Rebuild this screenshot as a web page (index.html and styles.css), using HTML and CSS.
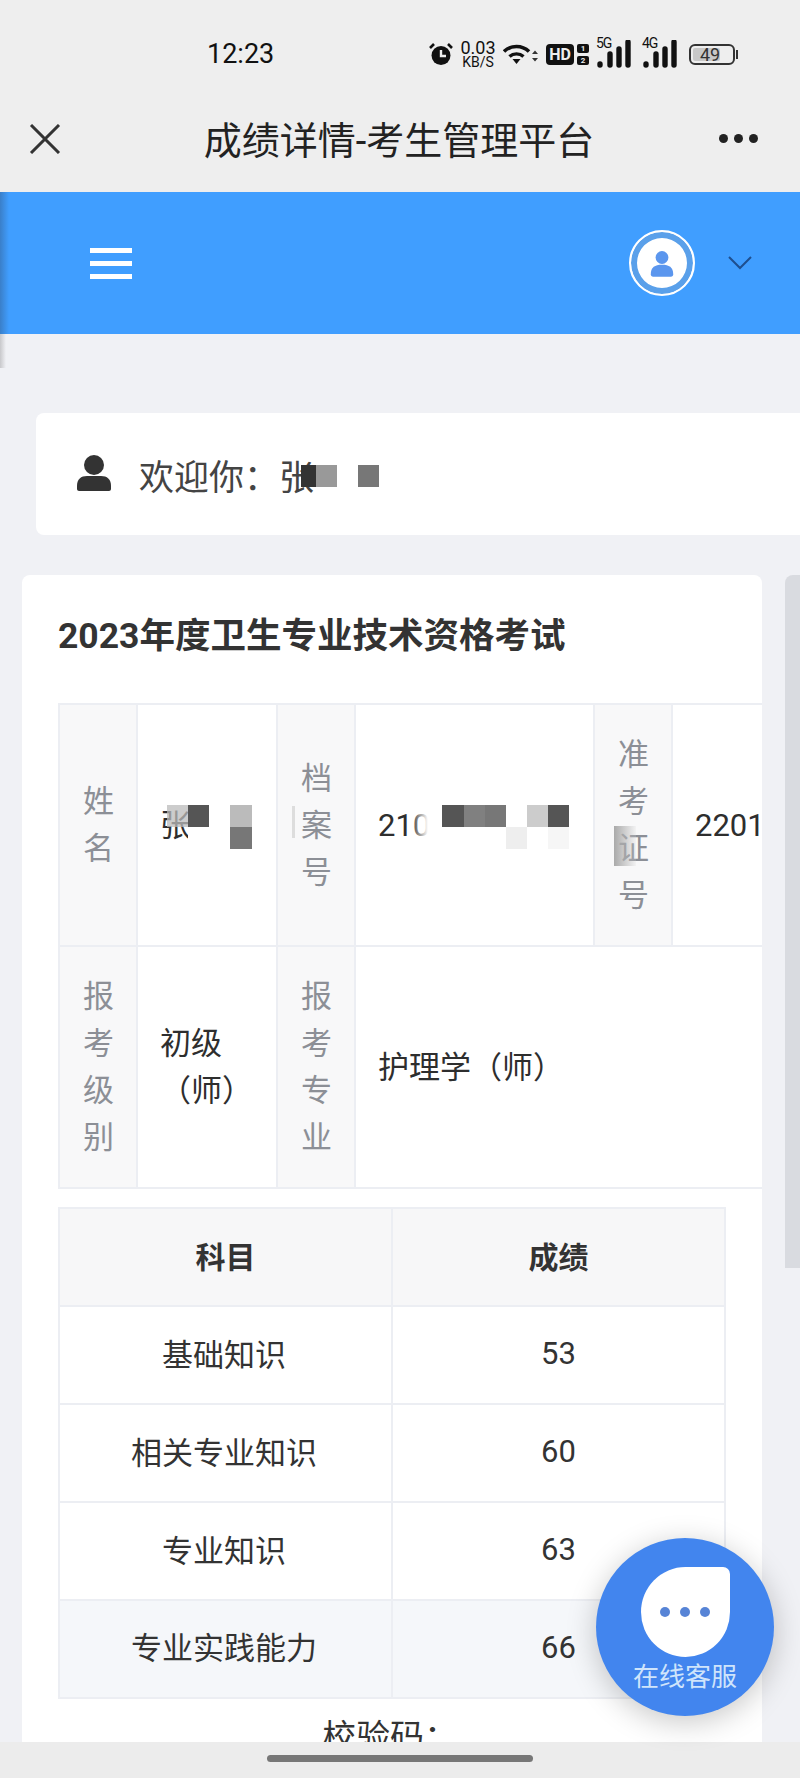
FILE: index.html
```html
<!DOCTYPE html>
<html lang="zh-CN">
<head>
<meta charset="utf-8">
<title>成绩详情-考生管理平台</title>
<link rel="stylesheet" href="styles.css">
</head>
<body>
<div class="screen">
  <div class="statusbar">
    <span class="time">12:23</span>
    <div class="status-icons">
      <svg class="ic-alarm" width="24" height="24" viewBox="0 0 24 24"><circle cx="12" cy="13.5" r="9.5" fill="#111"/><path d="M1 6l4-4M23 6l-4-4" stroke="#111" stroke-width="2.6"/><path d="M12 8v6h5" stroke="#eee" stroke-width="2.4" fill="none"/></svg>
      <div class="speed"><span class="speed-a">0.03</span><span class="speed-b">KB/S</span></div>
      <svg class="ic-wifi" width="35" height="22" viewBox="0 0 35 22"><path d="M1 8.5a18 18 0 0 1 25 0" stroke="#111" stroke-width="3.6" fill="none"/><path d="M6.5 13.5a10.500 10.500 0 0 1 14 0" stroke="#111" stroke-width="3.400" fill="none"/><path d="M9.500 16h8l-4 5z" fill="#111"/><path d="M29 11l3-3.500 3 3.500zM29 15l3 3.500 3-3.500z" fill="#333"/></svg>
      <span class="hd">HD</span>
      <div class="sims"><span class="sim">1</span><span class="sim">2</span></div>
      <div class="signal"><span class="net">5G</span><svg width="36" height="28" viewBox="0 0 36 28"><path d="M4 24v1M14 14v11M23 9v16M32 2v23" stroke="#111" stroke-width="5.400" stroke-linecap="round"/></svg></div>
      <div class="signal signal-last"><span class="net">4G</span><svg width="36" height="28" viewBox="0 0 36 28"><path d="M4 24v1M14 14v11M23 9v16M32 2v23" stroke="#111" stroke-width="5.400" stroke-linecap="round"/></svg></div>
      <div class="battery"><span class="battery-body"><span class="battery-level"></span><span class="battery-num">49</span></span><span class="battery-tip"></span></div>
    </div>
  </div>
  <div class="navbar">
    <svg width="32" height="30" viewBox="0 0 32 30"><path d="M2 1l28 28M30 1L2 29" stroke="#333" stroke-width="3" fill="none"/></svg>
    <h1 class="nav-title">成绩详情-考生管理平台</h1>
    <div class="nav-dots"><i></i><i></i><i></i></div>
  </div>
  <header class="topbar">
    <div class="burger"><i></i><i></i><i></i></div>
    <div class="user-menu">
      <div class="avatar">
        <svg width="24" height="27" viewBox="0 0 30 33"><circle cx="15" cy="9" r="8" fill="#5b96ee"/><path d="M1 30c0-9 5-12 14-12s14 3 14 12c0 2-1 3-3 3H4c-2 0-3-1-3-3z" fill="#5b96ee"/></svg>
      </div>
      <svg width="24" height="14" viewBox="0 0 24 14"><path d="M1 1l11 11L23 1" stroke="#1e4f8f" stroke-width="2" fill="none"/></svg>
    </div>
  </header>
  <main class="content">
    <div class="edge-stripe"></div>
    <section class="welcome">
      <svg class="welcome-icon" width="34" height="36" viewBox="0 0 34 36"><circle cx="17" cy="10" r="10" fill="#333"/><path d="M0 31c0-7 4-10 10-10h14c6 0 10 3 10 10v3c0 1-1 2-2 2H2c-1 0-2-1-2-2z" fill="#333"/></svg>
      <span class="welcome-text">欢迎你：张</span>
      <svg class="mosaic mosaic-welcome" width="80" height="22" viewBox="0 0 80 22"><rect x="0" width="15" height="22" fill="#333"/><rect x="15" width="21" height="22" fill="#999"/><rect x="57" width="21" height="22" fill="#777"/></svg>
    </section>
    <div class="scrollbar"></div>
    <section class="result-card">
      <h2 class="exam-title">2023年度卫生专业技术资格考试</h2>
      <div class="desc-wrap">
        <table class="desc">
          <colgroup><col class="c-label"><col class="c-name"><col class="c-label"><col class="c-file"><col class="c-label"><col class="c-ticket"></colgroup>
          <tr>
            <td class="lbl">姓名</td>
            <td class="val">张
              <svg class="mosaic mosaic-name" width="86" height="44" viewBox="0 0 86 44"><rect x="0" width="21" height="22" fill="#bbb" opacity=".75"/><rect x="21" width="21" height="22" fill="#555"/><rect x="63" width="22" height="22" fill="#bbb"/><rect x="63" y="22" width="22" height="22" fill="#777"/><rect x="21" y="22" width="21" height="22" fill="#fff"/></svg>
            </td>
            <td class="lbl">档案号<span class="smear smear-file"></span></td>
            <td class="val">210
              <svg class="mosaic mosaic-file" width="160" height="44" viewBox="0 0 160 44"><defs><linearGradient id="wipe" x1="0" y1="0" x2="1" y2="0"><stop offset="0" stop-color="#fff" stop-opacity=".2"/><stop offset=".5" stop-color="#fff"/></linearGradient></defs><rect x="0" width="28" height="44" fill="url(#wipe)"/><rect x="28" width="22" height="22" fill="#555"/><rect x="50" width="21" height="22" fill="#808080"/><rect x="71" width="21" height="22" fill="#777"/><rect x="92" y="22" width="21" height="22" fill="#eee"/><rect x="113" width="21" height="22" fill="#ccc"/><rect x="134" width="21" height="22" fill="#555"/><rect x="134" y="22" width="21" height="22" fill="#f6f6f6"/></svg>
            </td>
            <td class="lbl">准考证号<span class="smear smear-ticket"></span></td>
            <td class="val">2201</td>
          </tr>
          <tr>
            <td class="lbl">报考级别</td>
            <td class="val">初级（师）</td>
            <td class="lbl">报考专业</td>
            <td class="val" colspan="3">护理学（师）</td>
          </tr>
        </table>
      </div>
      <table class="scores">
        <thead><tr><th>科目</th><th>成绩</th></tr></thead>
        <tbody>
          <tr><td class="subject">基础知识</td><td>53</td></tr>
          <tr><td class="subject">相关专业知识</td><td>60</td></tr>
          <tr><td class="subject">专业知识</td><td>63</td></tr>
          <tr class="hover"><td class="subject">专业实践能力</td><td>66</td></tr>
        </tbody>
      </table>
      <p class="check-code">校验码：</p>
    </section>
  </main>
  <div class="homebar"><span class="home-pill"></span></div>
  <div class="fab">
    <div class="bubble"><i></i><i></i><i></i></div>
    <span class="fab-label">在线客服</span>
  </div>
</div>
</body>
</html>
```

FILE: styles.css
```css
* { box-sizing: border-box; }
html, body { margin: 0; padding: 0; }
body { font-family: Roboto, "Noto Sans CJK SC", sans-serif; color: #333; background: #eee; }
.screen { position: relative; width: 800px; height: 1778px; display: flex; flex-direction: column; overflow: hidden; }

.statusbar { height: 96px; background: #eeeeee; display: flex; align-items: center; justify-content: space-between; padding: 12px 62px 0 207px; }
.time { font-size: 27px; color: #111; line-height: 1; }
.status-icons { display: flex; align-items: center; height: 32px; }
.ic-alarm { margin-right: 7px; }
.speed { display: flex; flex-direction: column; align-items: center; width: 36px; margin-right: 7px; line-height: 1; color: #111; }
.speed-a { font-size: 18px; line-height: 16px; }
.speed-b { font-size: 14px; line-height: 13px; }
.ic-wifi { margin-right: 8px; }
.hd { width: 28px; height: 21px; background: #111; color: #eee; border-radius: 4px; font: 700 16px/21px Roboto, sans-serif; text-align: center; margin-right: 3px; }
.sims { display: flex; flex-direction: column; gap: 3px; margin-right: 7px; }
.sim { width: 12px; height: 9px; background: #111; color: #eee; border-radius: 2px; font: 700 8px/9px Roboto, sans-serif; text-align: center; }
.signal { position: relative; width: 36px; height: 28px; margin-right: 10px; }
.signal-last { margin-right: 11px; }
.signal svg { display: block; }
.net { position: absolute; left: 0; top: -4px; font-size: 14px; line-height: 14px; color: #111; letter-spacing: -1px; }
.battery { display: flex; align-items: center; }
.battery-body { position: relative; width: 46px; height: 21px; border: 2px solid #333; border-radius: 6px; display: block; overflow: hidden; }
.battery-level { position: absolute; left: 2px; top: 2px; bottom: 2px; width: 27px; background: #c8c8c8; border-radius: 2px; }
.battery-num { position: absolute; left: 0; right: 4px; top: 0; text-align: center; font-size: 18px; line-height: 17px; color: #333; }
.battery-tip { width: 2px; height: 9px; background: #333; margin-left: 1px; }

.navbar { height: 96px; background: #eeeeee; display: flex; align-items: center; justify-content: space-between; padding: 0 42px 11px 29px; }
.nav-title { margin: 6px 0 0 18px; font-size: 38px; font-weight: 400; color: #222; line-height: 1.2; }
.nav-dots { display: flex; gap: 6px; }
.nav-dots i { width: 9px; height: 9px; background: #222; border-radius: 50%; }

.topbar { height: 142px; background: #409eff; display: flex; align-items: center; justify-content: space-between; padding: 0 48px 0 90px; position: relative; }
.topbar::before { content: ""; position: absolute; left: 0; top: 0; bottom: 0; width: 9px; background: linear-gradient(90deg, #3a7fc9, #409eff); }
.burger { display: flex; flex-direction: column; gap: 8px; width: 42px; }
.burger i { height: 5px; background: #fff; }
.user-menu { display: flex; align-items: center; gap: 33px; }
.avatar { width: 66px; height: 66px; border-radius: 50%; border: 2px solid #fff; background: #fff; box-shadow: inset 0 0 0 6px #5aa0ea; display: flex; align-items: center; justify-content: center; }

.content { flex: 1; min-height: 0; background: #f0f1f5; position: relative; overflow: hidden; padding: 79px 0 0 22px; }
.edge-stripe { position: absolute; left: 0; top: 0; width: 6px; height: 34px; background: linear-gradient(90deg, #c8c8cb, #f0f1f5); }
.welcome { position: relative; margin-left: 14px; margin-right: -20px; height: 122px; background: #fff; border-radius: 8px; display: flex; align-items: center; padding-left: 41px; }
.welcome-icon { margin-right: 28px; margin-top: -2px; }
.welcome-text { font-size: 35px; line-height: 1; color: #444; margin-top: 9px; }
.mosaic { position: absolute; display: block; }
.mosaic-welcome { left: 265px; top: 52px; }

.scrollbar { position: absolute; right: 0; top: 241px; width: 15px; height: 693px; background: #d9dbe0; border-radius: 8px 0 0 0; }

.result-card { width: 740px; margin-top: 40px; height: 1300px; background: #fff; border-radius: 8px; padding: 0 0 0 36px; }
.exam-title { margin: 0; padding-top: 37px; height: 128px; font-size: 35.500px; line-height: 48px; font-weight: 700; color: #333; }

.desc-wrap { width: 704px; overflow: hidden; }
.desc { table-layout: fixed; width: 960px; border-collapse: collapse; font-size: 31px; line-height: 47px; }
.c-label { width: 78px; }
.c-name { width: 140px; }
.c-file { width: 239px; }
.c-ticket { width: 347px; }
.desc td { position: relative; height: 242px; border: 2px solid #eceef3; padding: 0 22px; vertical-align: middle; overflow: hidden; }
.desc .lbl { background: #f8f8f9; color: #8c8f96; text-align: center; padding: 0 23px; }
.desc .val { color: #2e2e2e; }
.mosaic-name { left: 29px; top: 100px; }
.mosaic-file { left: 58px; top: 100px; }
.smear { position: absolute; display: block; }
.smear-file { left: 14px; top: 101px; width: 3px; height: 32px; background: #ddd; }
.smear-ticket { left: 19px; top: 121px; width: 22px; height: 40px; background: linear-gradient(90deg, #aaa, rgba(220,220,220,.2)); }

.scores { table-layout: fixed; width: 668px; margin-top: 18px; border-collapse: collapse; font-size: 31px; text-align: center; }
.scores th, .scores td { height: 98px; border: 2px solid #eceef3; padding: 0 0 4px; color: #333; font-weight: 400; }
.scores .subject { padding: 0 3px 5px 0; }
.scores th { background: #f7f7f8; font-weight: 700; padding-bottom: 5px; font-size: 30px; }
.scores .hover td { background: #f5f7fa; }
.scores .hover .subject { padding-bottom: 8px; }
.check-code { margin: 16px 0 0; width: 668px; padding-right: 4px; font-size: 34px; line-height: 44px; text-align: center; color: #333; }

.homebar { height: 36px; background: #ececec; position: relative; display: flex; justify-content: center; padding-top: 13px; }
.home-pill { width: 266px; height: 7px; background: #777; border-radius: 4px; }

.fab { position: absolute; left: 596px; top: 1538px; width: 178px; height: 178px; border-radius: 50%; background: #4285ee; box-shadow: 0 6px 30px rgba(0,0,0,.22); display: flex; flex-direction: column; align-items: center; padding-top: 29px; }
.bubble { width: 89px; height: 90px; background: #fff; border-radius: 50% 7px 50% 50%; display: flex; align-items: center; justify-content: center; gap: 10px; }
.bubble i { width: 10px; height: 10px; border-radius: 50%; background: #5784d6; }
.fab-label { font-size: 26px; line-height: 36px; color: #cfe4fb; margin-top: 2px; }
```
